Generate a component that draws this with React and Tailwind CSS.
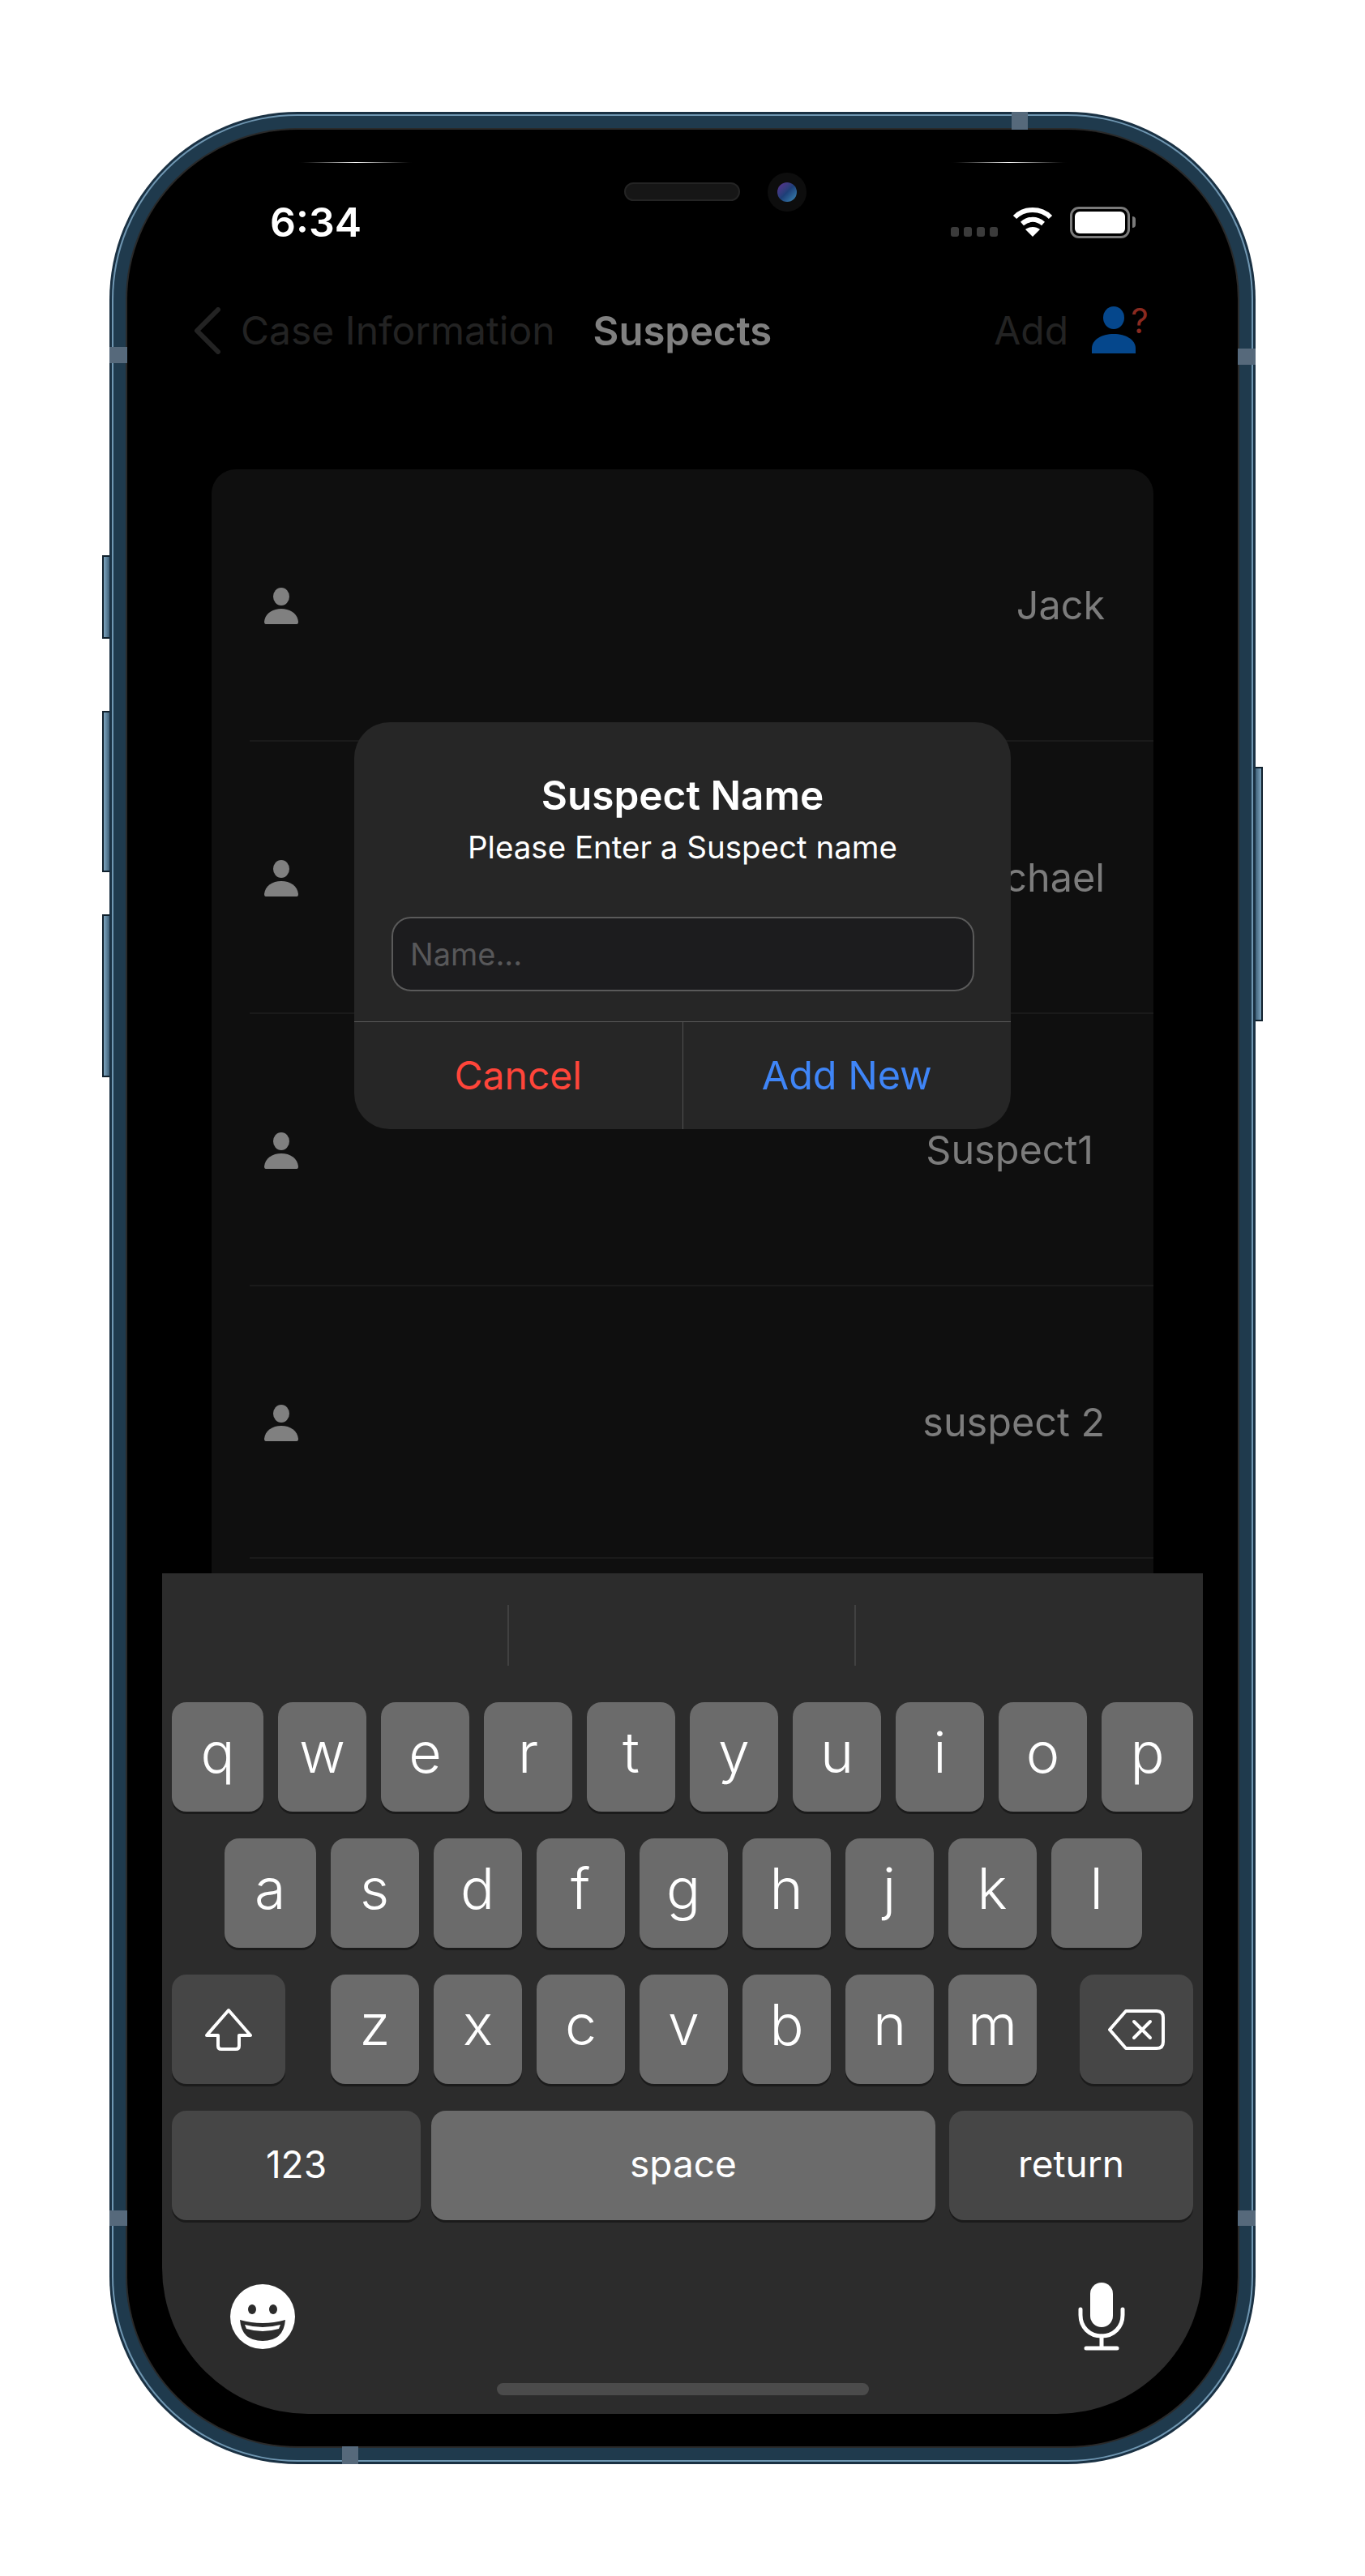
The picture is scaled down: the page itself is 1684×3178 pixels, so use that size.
import React from 'react';

const suspects = [
  { name: 'Jack', textClass: '' },
  { name: 'Michael', textClass: '' },
  { name: 'Suspect1', textClass: 'mr-[14px]' },
  { name: 'suspect 2', textClass: '' },
];
const row1 = ['w', 'e', 'r', 't', 'y', 'u', 'i', 'o'];
const row2 = ['s', 'd', 'f', 'g', 'h', 'j', 'k'];
const row3 = ['z', 'x', 'c', 'v', 'b', 'n', 'm'];

const Key = ({ label, className = 'w-[109px]' }) => (
  <div className={`h-[135px] pb-[12px] flex items-center justify-center rounded-[18px] bg-[#6b6b6b] shadow-[0_3px_0_#1b1b1b] text-white text-[70px] font-light ${className}`}>
    {label}
  </div>
);

const PersonIcon = () => (
  <svg width="42" height="45" viewBox="0 0 42 45" fill="#808080">
    <ellipse cx="21" cy="11" rx="10" ry="11" />
    <path d="M2 45Q0 45 0 42C1 32 10 26 21 26C32 26 41 32 42 42Q42 45 40 45Z" />
  </svg>
);

const Band = ({ className }) => <div className={`absolute bg-[#56697b] ${className}`} />;

export default function App() {
  return (
    <div className="w-[1684px] h-[3178px] bg-white pl-[135px] pt-[138px] font-['Inter',sans-serif]">
      <div className="relative w-[1414px] h-[2902px]">
        {/* Side buttons */}
        <div className="absolute left-[-9px] top-[547px] w-[9px] h-[103px] bg-gradient-to-r from-[#7ea5bf] to-[#3f6179] border-y-2 border-l-2 border-[#10202c]" />
        <div className="absolute left-[-9px] top-[739px] w-[9px] h-[199px] bg-gradient-to-r from-[#7ea5bf] to-[#3f6179] border-y-2 border-l-2 border-[#10202c]" />
        <div className="absolute left-[-9px] top-[990px] w-[9px] h-[201px] bg-gradient-to-r from-[#7ea5bf] to-[#3f6179] border-y-2 border-l-2 border-[#10202c]" />
        <div className="absolute right-[-9px] top-[808px] w-[9px] h-[314px] bg-gradient-to-l from-[#7ea5bf] to-[#3f6179] border-y-2 border-r-2 border-[#10202c]" />

        {/* Metal frame */}
        <div className="rounded-[232px] bg-[#1a3143] p-[3px]">
          <div className="rounded-[229px] bg-[#6f96b1] p-[2px]">
            <div className="rounded-[227px] bg-[#1f3a4d] p-[15px]">
              <div className="rounded-[212px] bg-[#2a2a2a] p-[2px]">
                <div className="relative w-[1370px] h-[2858px] rounded-[210px] bg-black overflow-hidden flex flex-col">
                  {/* Status bar */}
                  <div className="flex items-center justify-between h-[58px] mt-[85px] pl-[176px] pr-[126px]">
                    <span className="text-white text-[50px] leading-none font-semibold">6:34</span>
                    <div className="flex items-center">
                      <div className="flex gap-[6px] mt-[24px]">
                        <div className="w-[10px] h-[12px] rounded-[3px] bg-[#3b3b3b]" />
                        <div className="w-[10px] h-[12px] rounded-[3px] bg-[#3b3b3b]" />
                        <div className="w-[10px] h-[12px] rounded-[3px] bg-[#3b3b3b]" />
                        <div className="w-[10px] h-[12px] rounded-[3px] bg-[#3b3b3b]" />
                      </div>
                      <svg className="ml-[18px]" width="50" height="38" viewBox="0 0 50 38" fill="none" stroke="#fff" strokeWidth="6">
                        <path d="M3 13C15 1 35 1 47 13" />
                        <path d="M12 21C20 14 30 14 38 21" />
                        <path d="M25 37L16 28C21 24 29 24 34 28Z" fill="#fff" stroke="none" />
                      </svg>
                      <div className="ml-[21px] w-[74px] h-[39px] rounded-[11px] border-[3px] border-[#7a7a7a] p-[3px]">
                        <div className="w-full h-full rounded-[6px] bg-white" />
                      </div>
                      <div className="ml-[3px] w-[4px] h-[14px] rounded-r-full bg-[#7a7a7a]" />
                    </div>
                  </div>

                  {/* Nav bar */}
                  <div className="flex items-center h-[60px] mt-[75px] pl-[82px] text-[48px] leading-none">
                    <svg width="34" height="58" viewBox="0 0 34 58" fill="none" stroke="#232323" strokeWidth="6" strokeLinecap="round" strokeLinejoin="round">
                      <path d="M30 3L4 29L30 55" />
                    </svg>
                    <span className="ml-[24px] text-[#232323]">Case Information</span>
                    <span className="ml-[47px] text-[#808080] text-[49px] font-semibold">Suspects</span>
                    <span className="ml-[274px] text-[#232323]">Add</span>
                    <div className="relative ml-[29px] w-[70px] h-[60px]">
                      <svg width="54" height="58" viewBox="0 0 54 58" fill="#05478c">
                        <ellipse cx="27" cy="14" rx="13" ry="14" />
                        <path d="M0 58V52C0 41 12 34 27 34C42 34 54 41 54 52V58Z" />
                      </svg>
                      <span className="absolute left-[48px] top-[-6px] text-[#8a2a20] text-[42px] leading-[48px]">?</span>
                    </div>
                  </div>

                  {/* Suspect list */}
                  <div className="flex-1 mt-[141px] mb-[100px] ml-[104px] w-[1162px] rounded-[30px] bg-[#0f0f0f] overflow-hidden">
                    {suspects.map((s) => (
                      <div key={s.name} className="ml-[47px] h-[336px] pt-[3px] pl-[18px] pr-[60px] flex items-center justify-between border-b-2 border-[#1a1a1a]">
                        <PersonIcon />
                        <span className={`text-[#7c7c7c] text-[48.5px] ${s.textClass}`}>{s.name}</span>
                      </div>
                    ))}
                  </div>

                  {/* Alert */}
                  <div className="absolute left-[280px] top-[731px] w-[810px] h-[502px] rounded-[44px] bg-[#262626] flex flex-col">
                    <div className="mt-[62px] text-center text-white text-[49.5px] leading-[56px] font-semibold">Suspect Name</div>
                    <div className="mt-[14px] text-center text-white text-[38.5px] leading-[44px]">Please Enter a Suspect name</div>
                    <div className="mt-[64px] ml-[46px] mr-[45px] h-[92px] rounded-[24px] border-2 border-[#5a5a5a] bg-[#1c1c1e] pl-[21px] flex items-center text-[#58585a] text-[38px]">
                      Name...
                    </div>
                    <div className="flex-1 mt-[37px] flex border-t border-[#5a5a5a]">
                      <div className="flex-1 flex items-center justify-center border-r border-[#515151] text-[#ff453a] text-[48px]">Cancel</div>
                      <div className="flex-1 flex items-center justify-center text-[#3f85f7] text-[48.5px]">Add New</div>
                    </div>
                  </div>

                  {/* Keyboard */}
                  <div className="absolute left-[43px] top-[1781px] w-[1284px] h-[1037px] rounded-b-[180px] bg-[#2c2c2c]">
                    <div className="grid grid-cols-3 h-[159px] pt-[39px]">
                      <div className="h-[75px] border-r-2 border-[#414141]" />
                      <div className="h-[75px] border-r-2 border-[#414141]" />
                      <div className="h-[75px]" />
                    </div>
                    <div className="flex flex-col gap-[33px] px-[12px]">
                      <div className="flex gap-[18px]">
                        <Key label="q" className="flex-1" />
                        {row1.map((k) => <Key key={k} label={k} />)}
                        <Key label="p" className="flex-1" />
                      </div>
                      <div className="flex gap-[18px] pl-[65px] pr-[63px]">
                        <Key label="a" className="flex-1" />
                        {row2.map((k) => <Key key={k} label={k} />)}
                        <Key label="l" className="flex-1" />
                      </div>
                      <div className="flex">
                        <div className="w-[140px] h-[135px] flex items-center justify-center rounded-[18px] bg-[#464646] shadow-[0_3px_0_#1b1b1b]">
                          <svg width="60" height="54" viewBox="0 0 60 54" fill="none" stroke="#fff" strokeWidth="4" strokeLinejoin="round">
                            <path d="M30 3L57 34H43V47Q43 51 39 51H21Q17 51 17 47V34H3Z" />
                          </svg>
                        </div>
                        <div className="ml-[56px] flex gap-[18px]">
                          {row3.map((k) => <Key key={k} label={k} />)}
                        </div>
                        <div className="ml-auto w-[140px] h-[135px] flex items-center justify-center rounded-[18px] bg-[#464646] shadow-[0_3px_0_#1b1b1b]">
                          <svg width="70" height="50" viewBox="0 0 70 50" fill="none" stroke="#fff" strokeWidth="4" strokeLinejoin="round" strokeLinecap="round">
                            <path d="M22 2H60Q68 2 68 10V40Q68 48 60 48H22L2 25Z" />
                            <path d="M32 15L52 35M52 15L32 35" />
                          </svg>
                        </div>
                      </div>
                      <div className="flex text-white text-[46px]">
                        <div className="w-[307px] h-[135px] pb-[2px] flex items-center justify-center rounded-[18px] bg-[#464646] shadow-[0_3px_0_#1b1b1b]">123</div>
                        <div className="ml-[13px] flex-1 h-[135px] pb-[4px] flex items-center justify-center rounded-[18px] bg-[#6b6b6b] shadow-[0_3px_0_#1b1b1b]">space</div>
                        <div className="ml-[17px] w-[301px] h-[135px] pb-[4px] flex items-center justify-center rounded-[18px] bg-[#464646] shadow-[0_3px_0_#1b1b1b]">return</div>
                      </div>
                    </div>
                    <div className="flex items-center justify-between pl-[84px] pr-[96px] mt-[77px]">
                      <svg width="80" height="80" viewBox="0 0 80 80">
                        <circle cx="40" cy="40" r="40" fill="#fff" />
                        <ellipse cx="27" cy="31" rx="5" ry="6" fill="#2c2c2c" />
                        <ellipse cx="53" cy="31" rx="5" ry="6" fill="#2c2c2c" />
                        <path d="M12 44Q40 52 68 44Q66 70 40 70Q14 70 12 44Z" fill="#2c2c2c" />
                        <path d="M18 50Q40 56 62 50L60 55Q40 61 20 55Z" fill="#fff" />
                      </svg>
                      <svg width="58" height="84" viewBox="0 0 58 84" fill="none" stroke="#fff" strokeWidth="5" strokeLinecap="round">
                        <rect x="15" y="0" width="28" height="55" rx="14" fill="#fff" stroke="none" />
                        <path d="M3 33V40C3 55 14 66 29 66C44 66 55 55 55 40V33" />
                        <path d="M29 66V81M10 81H48" />
                      </svg>
                    </div>
                    <div className="absolute left-[413px] top-[999px] w-[459px] h-[15px] rounded-full bg-[#4b4b4b]" />
                  </div>

                  {/* Earpiece, camera and edge highlights */}
                  <div className="absolute left-[208px] top-[40px] w-[148px] h-px bg-gradient-to-r from-black via-white to-black" />
                  <div className="absolute left-[1013px] top-[40px] w-[150px] h-px bg-gradient-to-r from-black via-white to-black" />
                  <div className="absolute left-[613px] top-[65px] w-[143px] h-[23px] rounded-full bg-[#161616] border-2 border-[#242424]" />
                  <div className="absolute left-[790px] top-[53px] w-[48px] h-[48px] rounded-full bg-[#0d0d0d] flex items-center justify-center">
                    <div className="w-[24px] h-[24px] rounded-full bg-gradient-to-br from-[#5b2f8f] via-[#1d3f78] to-[#3f8ab5]" />
                  </div>
                </div>
              </div>
            </div>
          </div>
        </div>

        {/* Antenna bands */}
        <Band className="left-0 top-[290px] w-[22px] h-[20px]" />
        <Band className="right-0 top-[292px] w-[22px] h-[20px]" />
        <Band className="left-[1113px] top-0 w-[20px] h-[22px]" />
        <Band className="left-0 top-[2589px] w-[22px] h-[19px]" />
        <Band className="right-0 top-[2589px] w-[22px] h-[19px]" />
        <Band className="left-[287px] bottom-0 w-[20px] h-[22px]" />
      </div>
    </div>
  );
}
